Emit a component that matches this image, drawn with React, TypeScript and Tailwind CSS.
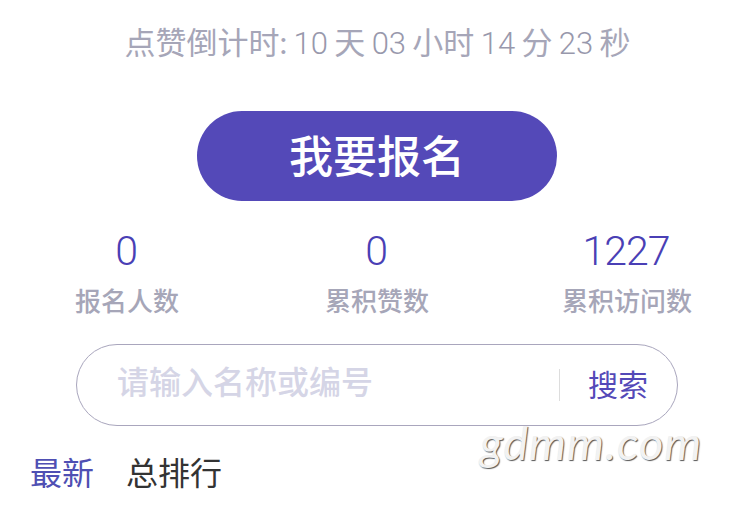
const FONT = "font-['Lato','Noto_Sans_CJK_SC',sans-serif]"
const DIGITS = "font-['Roboto','Noto_Sans_CJK_SC',sans-serif] font-light"

function Num({ children }: { children: string }) {
  return <span className={`text-[#9898ac] ${DIGITS}`}>{children}</span>
}

function Stat({ value, label, className }: { value: string; label: string; className: string }) {
  return (
    <div className={`flex flex-col items-center ${className}`}>
      <div className={`-translate-x-px text-[41px] leading-[48px] tracking-[-1px] text-[#4a3fb5] ${DIGITS}`}>{value}</div>
      <div className="mt-[7px] text-[26px] font-medium leading-[38px] text-[#a6a6b8]">{label}</div>
    </div>
  )
}

export default function App() {
  return (
    <div className={`relative h-[506px] w-[750px] overflow-hidden bg-white ${FONT}`}>
      <div className="pt-[22px]">
        <div className="h-[40px] pl-[5px] text-center text-[31px] leading-[40px] text-[#a6a6b8] [word-spacing:-1.6px]">
          点赞倒计时: <Num>10</Num> 天 <Num>03</Num> 小时 <Num>14</Num> 分 <Num>23</Num> 秒
        </div>
      </div>

      <div className="mt-[49px] flex justify-center pl-[4px]">
        <button className="h-[90px] w-[360px] rounded-[45px] bg-[#5449b8] text-[44px] font-medium text-white">
          我要报名
        </button>
      </div>

      <div className="relative mt-[26px] flex h-[94px] pl-[27px]">
        <Stat value="0" label="报名人数" className="w-[200px]" />
        <Stat value="0" label="累积赞数" className="ml-[50px] w-[200px]" />
        <Stat value="1227" label="累积访问数" className="ml-[50px] w-[200px]" />
      </div>

      <div className="mx-[76px] mt-[23px] flex h-[82px] w-[602px] items-center rounded-[41px] border border-[#a9a6bd]">
        <div className="flex-1 pb-[6px] pl-[40px] text-[32px] font-medium text-[#d5d5e6]">请输入名称或编号</div>
        <div className="h-[32px] w-px bg-[#dddddd]" />
        <div className="w-[117px] pb-[2px] pl-[28px] text-[30px] text-[#5449b8]">搜索</div>
      </div>

      <div className="mt-[24px] flex gap-[32px] pl-[30px] text-[32px] leading-[46px]">
        <span className="text-[#4f4fb3]">最新</span>
        <span className="text-[#333333]">总排行</span>
      </div>

      <div className="absolute left-[480px] top-[412px] text-[47px] italic leading-[60px] tracking-[1px] text-[#f2f2f2] [text-shadow:1px_1px_1px_#555]">
        gdmm.com
      </div>
    </div>
  )
}
